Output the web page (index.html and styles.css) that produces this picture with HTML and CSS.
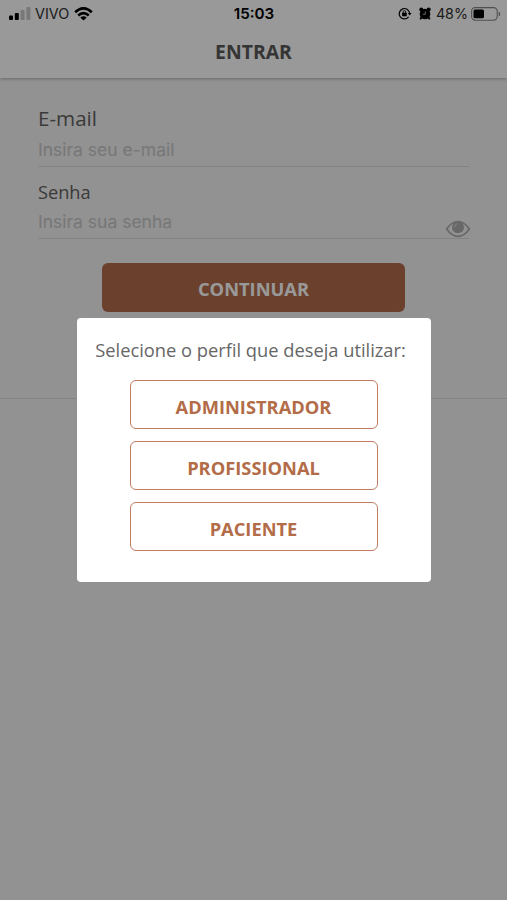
FILE: index.html
```html
<!DOCTYPE html>
<html lang="pt-BR">
<head>
<meta charset="UTF-8">
<meta name="viewport" content="width=device-width, initial-scale=1.0">
<title>Entrar</title>
<link rel="stylesheet" href="styles.css">
</head>
<body>
<header class="header">
  <div class="status">
    <div class="status-left">
      <svg class="signal" width="22" height="13" viewBox="0 0 22 13">
        <rect x="0" y="8.5" width="4" height="4.5" rx="1"/>
        <rect x="5.8" y="6" width="4" height="7" rx="1"/>
        <rect class="off" x="11.6" y="3" width="4" height="10" rx="1"/>
        <rect class="off" x="17.4" y="0" width="4" height="13" rx="1"/>
      </svg>
      <span class="carrier">VIVO</span>
      <svg class="wifi" width="19" height="14" viewBox="0 0 19 14">
        <path d="M1.2 5.2Q9.5 -2.4 17.8 5.2M4.2 8.4Q9.5 3.7 14.8 8.4" fill="none" stroke="#000" stroke-width="2.7"/>
        <path d="M9.5 13.6L6.3 10.6Q9.5 8 12.7 10.6Z"/>
      </svg>
    </div>
    <span class="clock">15:03</span>
    <div class="status-right">
      <svg class="lock" width="14" height="13" viewBox="0 0 14 13">
        <path d="M10.6 9.8A5.2 5.2 0 1 1 11.6 6.5" fill="none" stroke="#000" stroke-width="1.2"/>
        <path d="M9.8 6h3.8l-1.9 2.6z"/>
        <rect x="4.1" y="5.7" width="4.6" height="3.5" rx=".5"/>
        <path d="M5.1 6V4.9a1.3 1.3 0 0 1 2.6 0V6" fill="none" stroke="#000" stroke-width=".9"/>
      </svg>
      <svg class="alarm" width="12" height="13" viewBox="0 0 12 13">
        <circle cx="6" cy="7" r="5.3"/>
        <circle cx="2.3" cy="2.6" r="2"/>
        <circle cx="9.7" cy="2.6" r="2"/>
        <path d="M2.5 10l-1.2 2.3M9.5 10l1.2 2.3" stroke="#000" stroke-width="1.8"/>
        <path d="M6.3 4.5v2.8H4" fill="none" stroke="#ddd" stroke-width=".8"/>
      </svg>
      <span class="percent">48%</span>
      <svg class="battery" width="30" height="14" viewBox="0 0 30 14">
        <rect x=".6" y=".6" width="25.6" height="12.6" rx="3.6" fill="none" stroke="#858585" stroke-width="1.1"/>
        <rect x="2.5" y="2.5" width="10.5" height="8.8" rx="1.5"/>
        <path d="M27.7 4.8q1.6.5 1.6 2.2t-1.6 2.2z" fill="#858585"/>
      </svg>
    </div>
  </div>
  <h1>ENTRAR</h1>
</header>

<form class="login">
  <label class="label-email" for="email">E-mail</label>
  <div class="field">
    <input type="email" id="email" placeholder="Insira seu e-mail">
  </div>
  <label class="label-password" for="password">Senha</label>
  <div class="field">
    <input type="password" id="password" placeholder="Insira sua senha">
    <svg class="eye" width="26" height="18" viewBox="0 0 26 18">
      <path d="M1.6 9Q6.8 1.5 13 1.5T24.4 9Q19.2 16.3 13 16.3T1.6 9Z" fill="none" stroke="#adadad" stroke-width="1.7"/>
      <circle cx="13" cy="7.2" r="6" fill="#adadad"/>
      <path d="M9.6 7.2Q9.7 4.5 12.2 3.9" fill="none" stroke="#d0d0d0" stroke-width="1.1"/>
    </svg>
  </div>
  <button class="submit" type="button">CONTINUAR</button>
</form>

<div class="overlay">
  <div class="modal">
    <p>Selecione o perfil que deseja utilizar:</p>
    <button type="button">ADMINISTRADOR</button>
    <button type="button">PROFISSIONAL</button>
    <button type="button">PACIENTE</button>
  </div>
</div>
</body>
</html>
```
FILE: styles.css
```css
* {
  box-sizing: border-box;
}
body {
  margin: 0;
  height: 900px;
  overflow: hidden;
  font-family: "Open Sans", "Noto Sans", sans-serif;
  background-color: #f3f3f3;
  color: #626262;
}
svg {
  display: block;
}
.header {
  height: 78px;
  background-color: #ffffff;
  box-shadow: 0 1px 3px rgba(0, 0, 0, 0.28);
}
.status {
  display: grid;
  grid-template-columns: 1fr auto 1fr;
  align-items: center;
  height: 27px;
  padding: 0 6px 0 9px;
  font-family: Inter, sans-serif;
  font-size: 14px;
  color: #000000;
}
.status-left,
.status-right {
  display: flex;
  align-items: center;
}
.status-right {
  justify-content: flex-end;
}
.carrier {
  margin: 0 5px 0 4px;
  font-size: 14.4px;
  color: #303030;
}
.signal .off {
  fill: #c9c9c9;
}
.clock {
  padding-right: 2px;
  font-weight: 600;
  font-size: 15.2px;
}
.alarm {
  margin: 0 5px 0 7px;
}
.percent {
  margin-right: 3px;
  font-size: 14.3px;
  color: #303030;
}
h1 {
  margin: 11px 0 0;
  text-align: center;
  font-size: 19.4px;
  line-height: 28px;
  font-weight: 700;
  color: #595959;
}
.login {
  height: 321px;
  padding: 27px 38px 0;
  border-bottom: 1px solid #dddddd;
}
label {
  display: block;
}
.label-email {
  height: 28px;
  font-size: 20.6px;
  line-height: 26px;
}
.label-password {
  height: 25px;
  margin-top: 13px;
  font-size: 18.2px;
  line-height: 25px;
}
.field {
  display: flex;
  align-items: flex-start;
  height: 34px;
  border-bottom: 1px solid #dadada;
}
.field input {
  flex: 1;
  min-width: 0;
  height: 32px;
  padding: 0;
  border: none;
  outline: none;
  background: none;
  font-family: Inter, sans-serif;
  font-size: 17.5px;
}
.field input::placeholder {
  color: #c6c6c6;
  opacity: 1;
}
.eye {
  margin: 15px -2px 0 0;
}
button {
  display: block;
  padding: 0;
  font-family: inherit;
  font-size: 18.3px;
  font-weight: 700;
  border-radius: 6px;
  cursor: pointer;
}
.submit {
  width: 303px;
  height: 49px;
  margin: 24px auto 0;
  padding-top: 2px;
  border: none;
  background-color: #b36c4c;
  color: #ffffff;
}
/* escurece a tela atrás do modal */
.overlay {
  position: absolute;
  top: 0;
  right: 0;
  bottom: 0;
  left: 0;
  display: flex;
  align-items: center;
  justify-content: center;
  background-color: rgba(0, 0, 0, 0.4);
}
.modal {
  display: flex;
  flex-direction: column;
  align-items: center;
  gap: 12px;
  width: 354px;
  height: 264px;
  padding-top: 18px;
  border-radius: 4px;
  background-color: #ffffff;
}
.modal p {
  margin: 0 0 4px;
  padding-right: 6px;
  font-size: 18.3px;
  line-height: 28px;
  white-space: nowrap;
  color: #666666;
}
.modal button {
  width: 248px;
  height: 49px;
  padding-top: 4px;
  border: 1px solid #c17b60;
  background-color: #ffffff;
  color: #b36c48;
}
```
